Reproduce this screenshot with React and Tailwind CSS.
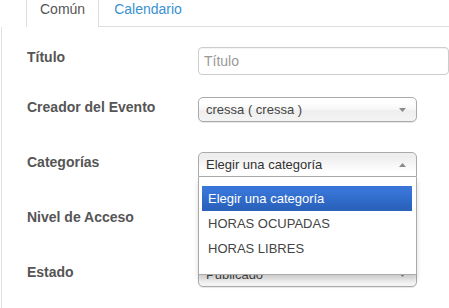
const font = "font-['Liberation_Sans',Arial,sans-serif]";

const Arrow = ({ up }) => (
  <svg width="7" height="4" viewBox="0 0 7 4" className="absolute right-[10px] top-[10px]">
    <path d={up ? 'M0 4 L3.5 0 L7 4 Z' : 'M0 0 L7 0 L3.5 4 Z'} fill="#8a8a8a" />
  </svg>
);

const Select = ({ value, open, children }) => (
  <div className="relative">
    <div
      className={`relative h-[25px] w-[219px] border border-[#aaa] pl-[7px] text-[13px] leading-[23px] ${
        open
          ? 'rounded-t-[5px] bg-[linear-gradient(#eee_20%,#fff_80%)] text-[#333]'
          : 'rounded-[5px] bg-[linear-gradient(#fff_20%,#f6f6f6_50%,#eee_52%,#f4f4f4_100%)] text-[#444] shadow-[0_1px_1px_rgba(0,0,0,0.1)]'
      }`}
    >
      {value}
      <Arrow up={open} />
    </div>
    {children}
  </div>
);

const Row = ({ label, className, children }) => (
  <div className={`flex items-start ${className}`}>
    <div className="w-[171px] shrink-0 text-[14px] font-bold leading-[20px] text-[#555]">{label}</div>
    {children}
  </div>
);

const options = ['Elegir una categoría', 'HORAS OCUPADAS', 'HORAS LIBRES'];

export default function App() {
  return (
    <div className={`relative h-[308px] w-[449px] overflow-hidden bg-white ${font}`}>
      <div className="ml-[26px] flex h-[27px] border-b border-[#ddd]">
        <div className="-mb-px h-[27px] border-x border-[#ddd] bg-white px-[13px] text-[14px] leading-[19px] text-[#555]">
          Común
        </div>
        <div className="ml-[2px] px-[13px] text-[14px] leading-[19px] text-[#3a92d0]">Calendario</div>
      </div>

      <div className="ml-[1px] h-[281px] border-l border-[#e2e2e2] pl-[25px]">
        <Row label="Título" className="pt-[20px]">
          <div className="h-[28px] w-[270px] rounded-[4px] border border-[#ccc] bg-white pl-[5px] text-[14px] leading-[26px] text-[#999] shadow-[inset_0_1px_1px_rgba(0,0,0,0.05)]">
            Título
          </div>
        </Row>

        <Row label="Creador del Evento" className="mt-[22px]">
          <Select value="cressa ( cressa )" />
        </Row>

        <Row label="Categorías" className="relative z-10 mt-[30px]">
          <Select value="Elegir una categoría" open>
            <div className="absolute left-0 top-[25px] h-[98px] w-[219px] border border-t-0 border-[#aaa] bg-white pl-[3px] pr-[4px] pt-[9px] shadow-[0_4px_5px_rgba(0,0,0,0.15)]">
              {options.map((o, i) => (
                <div
                  key={o}
                  className={`h-[25px] px-[6px] py-[5px] text-[13px] leading-[15px] ${
                    i === 0 ? 'bg-[linear-gradient(#3875d7_20%,#2a62bc_90%)] text-white' : 'text-[#444]'
                  }`}
                >
                  {o}
                </div>
              ))}
            </div>
          </Select>
        </Row>

        <Row label="Nivel de Acceso" className="mt-[30px]">
          <Select value="" />
        </Row>

        <Row label="Estado" className="mt-[30px]">
          <Select value="Publicado" />
        </Row>
      </div>
    </div>
  );
}
